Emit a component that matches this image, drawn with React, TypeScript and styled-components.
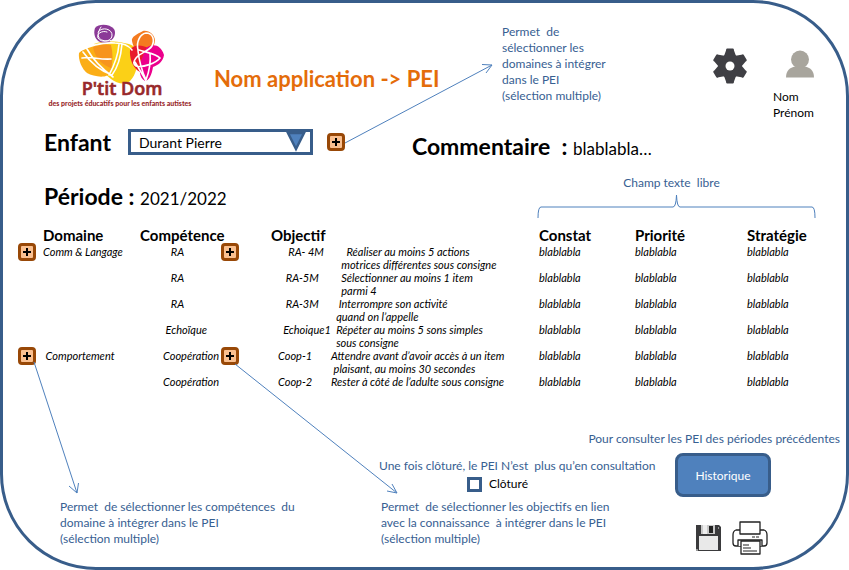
import React from "react";
import styled, { createGlobalStyle } from "styled-components";

const NAVY = "#385d8a";
const BLUE = "#4f81bd";

const GlobalStyle = createGlobalStyle`
  body {
    margin: 0;
    background: #fff;
    color: #000;
    font-family: Lato, "Open Sans", sans-serif;
    font-size: 13px;
    line-height: 16px;
  }
  * { box-sizing: border-box; }
`;

const Frame = styled.main`
  position: relative;
  display: flex;
  flex-direction: column;
  min-height: 100vh;
  border: 3px solid ${NAVY};
  border-radius: 96px;
`;

const Header = styled.header`
  display: grid;
  grid-template-columns: 168fr 288fr 211fr 60fr 73fr;
  align-items: start;
  padding: 21px 0 0 43px;
  height: 123px;
`;

const Title = styled.h1`
  margin: 42px 0 0;
  color: #e46c0a;
  font-size: 22px;
  line-height: 26px;
  font-weight: 700;
  white-space: nowrap;
`;

const Note = styled.p`
  margin: 0;
  color: #376092;
  font-size: 12px;
  line-height: 16px;
  white-space: pre;
`;

const IconButton = styled.button`
  display: block;
  padding: 0;
  border: 0;
  background: none;
  cursor: pointer;
  svg { display: block; }
`;

const GearSlot = styled.div`
  padding-top: 24px;
`;

const User = styled.div`
  display: flex;
  flex-direction: column;
  gap: 11px;
  padding-top: 26px;
  font-size: 12px;
  svg { display: block; margin-left: 13px; }
`;

const Fields = styled.section`
  display: grid;
  grid-template-columns: 367fr 433fr;
  padding-left: 41px;
  height: 42px;
`;

const Field = styled.div`
  display: flex;
  align-items: center;
  height: 32px;
`;

const TextField = styled.div`
  padding-top: 7px;
  font-size: 17px;
  line-height: 26px;
  white-space: pre;
`;

const Strong = styled.span`
  font-size: 23px;
  font-weight: 700;
`;

const Label = styled.label`
  width: 84px;
  font-size: 23px;
  font-weight: 700;
  line-height: 26px;
`;

const SelectBox = styled.div`
  position: relative;
  width: 185px;
  margin-right: 14px;
  svg {
    position: absolute;
    right: 7px;
    top: 3px;
    pointer-events: none;
  }
`;

const Select = styled.select`
  display: block;
  width: 100%;
  height: 26px;
  padding: 0 8px;
  appearance: none;
  border: 3px solid ${NAVY};
  border-radius: 0;
  background: #fff;
  color: #000;
  font: 14px Lato, sans-serif;
`;

const Plus = styled.button`
  display: flex;
  align-items: center;
  justify-content: center;
  width: 18px;
  height: 18px;
  padding: 0;
  border: 3px solid #984807;
  border-radius: 4px;
  background: #fac090;
  cursor: pointer;
`;

const Period = styled.section`
  display: grid;
  grid-template-columns: 493fr 279fr 30fr;
  padding-left: 41px;
  height: 57px;
`;

const PeriodField = styled(TextField)`
  padding-top: 15px;
`;

const FreeText = styled.div`
  display: flex;
  flex-direction: column;
  align-items: center;
  padding-top: 7px;
  gap: 4px;
  svg { display: block; width: 100%; }
`;

const FreeTextNote = styled(Note)`
  padding-right: 10px;
`;

const Table = styled.table`
  width: calc(100% - 15px);
  margin-left: 15px;
  table-layout: fixed;
  border-collapse: collapse;
  th, td { padding: 0; text-align: left; vertical-align: top; white-space: pre; }
  th { font-size: 15px; line-height: 20px; height: 20px; font-weight: 700; }
  td { font-size: 11px; line-height: 13px; height: 26px; font-style: italic; }
`;

const PlusSlot = styled.div`
  height: 13px;
  margin-top: -2px;
`;

const Footer = styled.footer`
  display: grid;
  grid-template-columns: 319fr 296fr 171fr;
  padding: 30px 0 0 57px;
`;

const History = styled(Note)`
  grid-column: 1 / -1;
  justify-self: end;
  padding-right: 6px;
  padding-bottom: 6px;
`;

const NoteSlot = styled.div`
  align-self: end;
  padding-bottom: 8px;
`;

const Closing = styled.div`
  padding-top: 5px;
`;

const Check = styled.label`
  display: flex;
  align-items: center;
  gap: 7px;
  height: 20px;
  padding-left: 88px;
  font-size: 12px;
`;

const Box = styled.input`
  appearance: none;
  width: 15px;
  height: 15px;
  margin: 0;
  border: 3px solid ${NAVY};
  background: #fff;
  &:checked { background: ${BLUE}; }
`;

const ClosingNote = styled(Note)`
  padding: 5px 0 0 2px;
`;

const Actions = styled.div`
  display: flex;
  flex-direction: column;
  gap: 24px;
`;

const HistoryButton = styled.button`
  width: 96px;
  height: 44px;
  padding: 0;
  border: 3px solid ${NAVY};
  border-radius: 8px;
  background: ${BLUE};
  color: #fff;
  font: 12px Lato, sans-serif;
  cursor: pointer;
`;

const Tools = styled.div`
  display: flex;
  align-items: center;
  gap: 11px;
  padding-left: 20px;
`;

const Arrows = styled.svg`
  position: absolute;
  left: -3px;
  top: -3px;
  width: calc(100% + 6px);
  height: calc(100% + 6px);
  pointer-events: none;
`;

const Logo = () => (
  <svg width="148" height="86" viewBox="45 23 148 86" role="img" aria-label="P'tit Dom">
    <path d="M93 43c9-3 20-3 30-1 7 1 12 3 13 9 2 12-1 23-7 29-5 5-14 2-19-2-8-6-15-19-17-35z" fill="#fbd017" />
    <path d="M78 52c5-6 16-9 27-10 4 9 8 21 5 29-3 7-17 5-24 1-5-4-9-13-8-20z" fill="#fbae17" />
    <path d="M92 46c6-2 12-3 18-2 2 8 2 16 0 23-8-3-16-9-18-21z" fill="#f7941d" />
    <path d="M94 27c4-5 15-4 19 1 3 5-1 13-8 14-7 1-14-5-11-15z" fill="#8b3a97" />
    <path d="M131 40c-1-4 5-7 11-10 6-1 12 4 12 10-1 6-4 10-11 12-7 0-11-6-12-12z" fill="#f47b20" />
    <path d="M129 49c4-6 12-5 18-2 3 5 1 15-3 25-7 1-16-9-15-23z" fill="#e81c2e" />
    <path d="M145 47c7-5 15-3 18 7-1 7-6 10-11 12-1 7-4 14-8 14-6-3-6-12-4-20z" fill="#ec008c" />
    <g fill="none" stroke="#fff" strokeLinecap="round">
      <path d="M97 31c4-6 15-3 14 4-1 6-11 7-14 2-2-4 4-8 9-6M100 26c-8 12 2 16 12 13" strokeWidth="1" />
      <path d="M78 50c10-5 21-9 36-8 10 0 14 3 17 7M82 51c7 10 15 18 29 23 7-9 9-20 10-31M86 48c5 9 14 19 26 28M118 43c-1 13-5 22-10 31M81 57c9-2 17 2 29 1" strokeWidth="1.6" />
      <path d="M137 49c-2-8 2-16 8-17 7 0 9 7 6 13-4 6-11 6-16 12-3 4-3 6 0 8 7 2 20-3 24-8-5-5-13-5-21-8M137 50c1 9 4 20 8 29 3-8 5-17 4-27M134 61c4 7 8 13 11 19" strokeWidth="1.6" />
    </g>
    <text x="121" y="94" textAnchor="middle" fontFamily="Open Sans, sans-serif" fontWeight="600" fontSize="18" fill="#98282a" stroke="#98282a" strokeWidth="0.600">P'tit Dom</text>
    <text x="119" y="105" textAnchor="middle" fontFamily="Lato, sans-serif" fontWeight="900" fontSize="7" fill="#98282a">des projets éducatifs pour les enfants autistes</text>
  </svg>
);

const Gear = () => (
  <svg width="34" height="36" viewBox="-17 -18 34 36">
    <g fill="#3f3f44">
      <circle r="12" />
      {[0, 60, 120, 180, 240, 300].map((a) => (
        <path key={a} transform={`rotate(${a})`} d="M-6-10L-4-15.500Q-4-17.500-3-17.500H3Q4-17.500 4-15.500L6-10z" />
      ))}
    </g>
    <circle r="4.500" fill="#fff" />
  </svg>
);

const Person = () => (
  <svg width="28" height="28" viewBox="0 0 28 28" fill="#a8a59d">
    <circle cx="14" cy="9.500" r="9" />
    <path d="M0 27.500c0-7 4-10 9-11h10c5 1 9 4 9 11z" />
  </svg>
);

const Floppy = () => (
  <svg width="26" height="28" viewBox="0 0 26 28">
    <path d="M1 1h23l2 2v24H1z" fill="#3a3a3c" />
    <path d="M6 1h14v9H6z" fill="#c9c9c9" />
    <path d="M8 1h4v9H8z" fill="#eee" />
    <path d="M14 2h4v7h-4z" fill="#222" />
    <path d="M4 12h19v14H4z" fill="#e9e9e9" />
    <path d="M1 25h2v2H1zM23 3h1v2h-1z" fill="#999" />
  </svg>
);

const Printer = () => (
  <svg width="36" height="34" viewBox="0 0 36 34" fill="#fff" stroke="#222" strokeWidth="1.300" strokeLinejoin="round">
    <path d="M8 9H4Q1 10 1 14v8q0 3 3 3h28q3 0 3-3v-8q0-4-3-5h-4" />
    <path d="M8 13V1h20v12z" />
    <path d="M6 25v-6h24v6" />
    <path d="M9 20h19v13H9z" />
    <path d="M11 24h6M11 27h8M11 30h14M14 30h11M20 16h3M24 16h3" strokeWidth="1.200" />
  </svg>
);

const AddButton = ({ label }: { label: string }) => (
  <Plus type="button" aria-label={label}>
    <svg width="8" height="8" viewBox="0 0 8 8" stroke="#000" strokeWidth="2">
      <path d="M4 0v8M0 4h8" />
    </svg>
  </Plus>
);

type Row = { domain: string; addSkill?: boolean; skill: string; addGoal?: boolean; code: string; goal: string };

const rows: Row[] = [
  { domain: "Comm & Langage", addSkill: true, skill: "   RA", addGoal: true, code: "    RA- 4M", goal: "      Réaliser au moins 5 actions\n    motrices différentes sous consigne" },
  { domain: "", skill: "   RA", code: "   RA-5M", goal: "    Sélectionner au moins 1 item\n    parmi 4" },
  { domain: "", skill: "   RA", code: "   RA-3M", goal: "   Interrompre son activité\n  quand on l’appelle" },
  { domain: "", skill: " Echoïque", code: "  Echoique1", goal: "  Répéter au moins 5 sons simples\n  sous consigne" },
  { domain: " Comportement", addSkill: true, skill: "Coopération", addGoal: true, code: "Coop-1", goal: "Attendre avant d’avoir accès à un item\n plaisant, au moins 30 secondes" },
  { domain: "", skill: "Coopération", code: "Coop-2", goal: "Rester à côté de l’adulte sous consigne" },
];

const SkillCell = styled.td`
  && { padding-left: 23px; }
`;

const CodeCell = styled.td`
  && { padding-left: 7px; }
`;

const columns = [25, 97, 81, 50, 60, 208, 96, 112, 99];

const Col = styled.col<{ $w: number }>`
  width: ${(p) => p.$w}px;
`;

export default function App() {
  return (
    <>
      <GlobalStyle />
      <Frame>
        <Header>
          <Logo />
          <Title>{"Nom application -> PEI"}</Title>
          <Note>{"Permet  de\nsélectionner les\ndomaines à intégrer\ndans le PEI\n(sélection multiple)"}</Note>
          <GearSlot>
            <IconButton type="button" aria-label="Paramètres"><Gear /></IconButton>
          </GearSlot>
          <User>
            <Person />
            <div>Nom<br />Prénom</div>
          </User>
        </Header>

        <Fields>
          <Field>
            <Label htmlFor="enfant">Enfant</Label>
            <SelectBox>
              <Select id="enfant" defaultValue="Durant Pierre">
                <option>Durant Pierre</option>
              </Select>
              <svg width="20" height="20" viewBox="0 0 20 20">
                <path d="M2 1h16l-8 16z" fill={BLUE} stroke={NAVY} strokeWidth="2.500" />
              </svg>
            </SelectBox>
            <AddButton label="Ajouter un domaine" />
          </Field>
          <TextField><Strong>{"Commentaire  : "}</Strong>blablabla…</TextField>
        </Fields>

        <Period>
          <PeriodField><Strong>{"Période : "}</Strong>2021/2022</PeriodField>
          <FreeText>
            <FreeTextNote>{"Champ texte  libre"}</FreeTextNote>
            <svg height="24" viewBox="0 0 279 24" preserveAspectRatio="none" fill="none" stroke={BLUE}>
              <path d="M1 23Q1 12 4 12H136Q139 12 139.500 0Q140 12 143 12H275Q278 12 278 23" />
            </svg>
          </FreeText>
        </Period>

        <Table>
          <colgroup>{columns.map((w, i) => <Col key={i} $w={w} />)}</colgroup>
          <thead>
            <tr>
              <th />
              <th>Domaine</th>
              <th colSpan={2}>Compétence</th>
              <th colSpan={2}>Objectif</th>
              <th>Constat</th>
              <th>Priorité</th>
              <th>Stratégie</th>
            </tr>
          </thead>
          <tbody>
            {rows.map((r, i) => (
              <tr key={i}>
                <td>{r.addSkill && <PlusSlot><AddButton label="Ajouter une compétence" /></PlusSlot>}</td>
                <td>{r.domain}</td>
                <SkillCell>{r.skill}</SkillCell>
                <td>{r.addGoal && <PlusSlot><AddButton label="Ajouter un objectif" /></PlusSlot>}</td>
                <CodeCell>{r.code}</CodeCell>
                <td>{r.goal}</td>
                <td>blablabla</td>
                <td>blablabla</td>
                <td>blablabla</td>
              </tr>
            ))}
          </tbody>
        </Table>

        <Footer>
          <History>Pour consulter les PEI des périodes précédentes</History>
          <NoteSlot>
            <Note>{"Permet  de sélectionner les compétences  du\ndomaine à intégrer dans le PEI\n(sélection multiple)"}</Note>
          </NoteSlot>
          <Closing>
            <Note>{"Une fois clôturé, le PEI N’est  plus qu’en consultation"}</Note>
            <Check><Box type="checkbox" />Clôturé</Check>
            <ClosingNote>{"Permet  de sélectionner les objectifs en lien\navec la connaissance  à intégrer dans le PEI\n(sélection multiple)"}</ClosingNote>
          </Closing>
          <Actions>
            <HistoryButton type="button">Historique</HistoryButton>
            <Tools>
              <IconButton type="button" aria-label="Enregistrer"><Floppy /></IconButton>
              <IconButton type="button" aria-label="Imprimer"><Printer /></IconButton>
            </Tools>
          </Actions>
        </Footer>

        <Arrows viewBox="0 0 849 570" preserveAspectRatio="none" fill="none" stroke={BLUE} aria-hidden="true">
          <path d="M345 143L492 65M482 64.500L492 65L486 73" />
          <path d="M34 362L77 493M69 486L77 493L78.500 483" />
          <path d="M235 364L397 493M387 491L397 493L392 484" />
        </Arrows>
      </Frame>
    </>
  );
}
